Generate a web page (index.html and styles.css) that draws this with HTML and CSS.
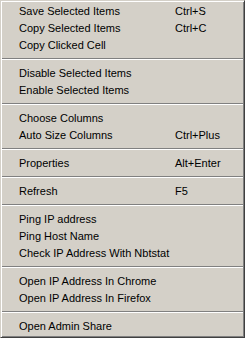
FILE: index.html
```html
<!DOCTYPE html>
<html lang="en">
<head>
  <meta charset="UTF-8" />
  <title>Context Menu</title>
  <link rel="stylesheet" href="styles.css">
</head>
<body>
  <ul class="menu">
    <li class="item"><span>Save Selected Items</span><span>Ctrl+S</span></li>
    <li class="item"><span>Copy Selected Items</span><span>Ctrl+C</span></li>
    <li class="item"><span>Copy Clicked Cell</span><span></span></li>
    <li class="sep"></li>
    <li class="item"><span>Disable Selected Items</span><span></span></li>
    <li class="item"><span>Enable Selected Items</span><span></span></li>
    <li class="sep"></li>
    <li class="item"><span>Choose Columns</span><span></span></li>
    <li class="item"><span>Auto Size Columns</span><span>Ctrl+Plus</span></li>
    <li class="sep"></li>
    <li class="item"><span>Properties</span><span>Alt+Enter</span></li>
    <li class="sep"></li>
    <li class="item"><span>Refresh</span><span>F5</span></li>
    <li class="sep"></li>
    <li class="item"><span>Ping IP address</span><span></span></li>
    <li class="item"><span>Ping Host Name</span><span></span></li>
    <li class="item"><span>Check IP Address With Nbtstat</span><span></span></li>
    <li class="sep"></li>
    <li class="item"><span>Open IP Address In Chrome</span><span></span></li>
    <li class="item"><span>Open IP Address In Firefox</span><span></span></li>
    <li class="sep"></li>
    <li class="item"><span>Open Admin Share</span><span></span></li>
  </ul>
</body>
</html>
```

FILE: styles.css
```css
body { margin: 0; background: #d4d0c8; }
.menu {
  list-style: none; margin: 0; padding: 1px;
  width: 245px; height: 338px; box-sizing: border-box;
  background: #d4d0c8;
  border: 1px solid; border-color: #d4d0c8 #404040 #404040 #d4d0c8;
  box-shadow: inset 1px 1px #fff, inset -1px -1px #808080;
  font-family: "Liberation Sans", Arial, sans-serif; font-size: 11px; color: #000;
}
.item {
  display: grid; grid-template-columns: 156px auto;
  height: 17px; line-height: 18px; padding-left: 17px;
  white-space: nowrap;
}
.sep { height: 11px; display: flex; flex-direction: column; justify-content: center; }
.sep::before { content: ""; display: block; border-top: 1px solid #808080; border-bottom: 1px solid #fff; }
```
